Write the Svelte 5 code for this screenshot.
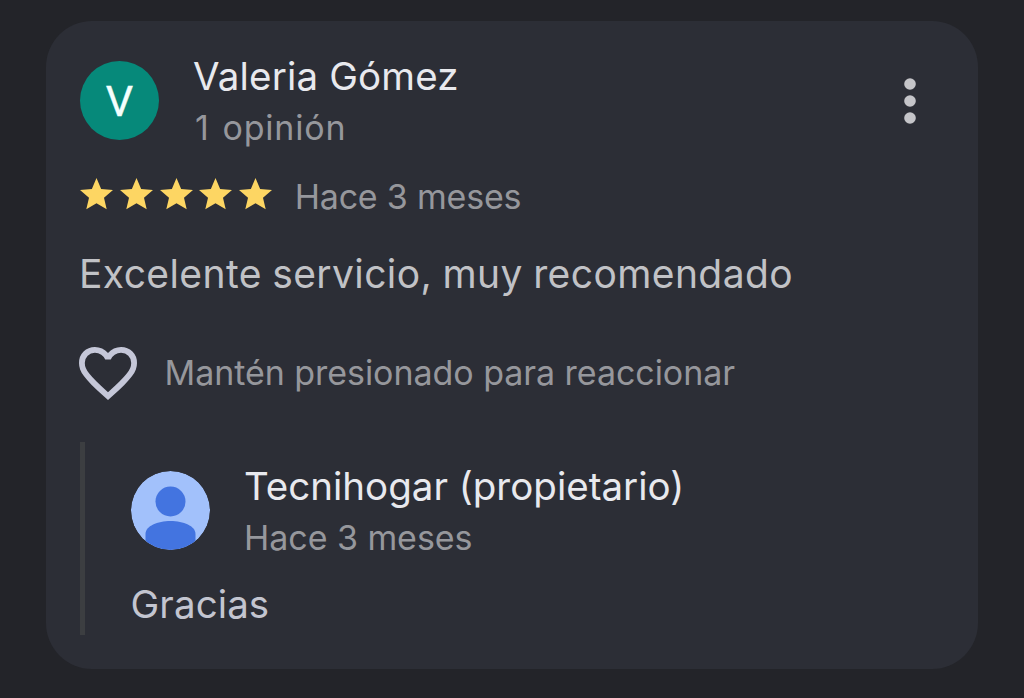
<script>
  const stars = [0, 1, 2, 3, 4];
</script>

<main class="page">
  <article class="card">
    <header class="head">
      <div class="avatar letter"><span>V</span></div>
      <div class="who">
        <div class="name">Valeria Gómez</div>
        <div class="meta count">1 opinión</div>
      </div>
      <svg class="menu" width="12" height="48" viewBox="0 0 12 48" aria-hidden="true">
        <circle cx="6" cy="7" r="5.8" />
        <circle cx="6" cy="24" r="5.8" />
        <circle cx="6" cy="41" r="5.8" />
      </svg>
    </header>

    <div class="rating">
      <div class="stars">
        {#each stars as s (s)}
          <svg width="33" height="33" viewBox="0 0 20 20" aria-hidden="true">
            <path d="M10 15.27 16.18 19l-1.64-7.03L20 7.24l-7.19-.61L10 0 7.19 6.63 0 7.24l5.46 4.73L3.82 19z" />
          </svg>
        {/each}
      </div>
      <div class="meta when">Hace 3 meses</div>
    </div>

    <p class="body review">Excelente servicio, muy recomendado</p>

    <div class="react">
      <svg class="heart" width="58" height="53" viewBox="2 2.65 20 18.35" preserveAspectRatio="none" aria-hidden="true">
        <path d="m12 21-1.45-1.3q-2.525-2.275-4.175-3.925T3.75 12.812 2.388 10.4 2 8.15Q2 5.8 3.575 4.225T7.5 2.65q1.3 0 2.475.55T12 4.75q.85-1 2.025-1.55T16.5 2.65q2.35 0 3.925 1.575T22 8.15q0 1.15-.387 2.25t-1.363 2.412-2.625 2.963T13.45 19.7zm0-2.7q2.4-2.15 3.95-3.687t2.45-2.675 1.25-2.026T20 8.15q0-1.5-1-2.5t-2.5-1q-1.175 0-2.175.662T12.95 7h-1.9q-.375-1.025-1.375-1.687T7.5 4.65q-1.5 0-2.5 1t-1 2.5q0 .875.35 1.763t1.25 2.025T8.05 14.613 12 18.3" />
      </svg>
      <div class="meta hint">Mantén presionado para reaccionar</div>
    </div>

    <section class="reply">
      <div class="head">
        <svg class="avatar" viewBox="0 0 79 79" aria-hidden="true">
          <defs><clipPath id="disc"><circle cx="39.5" cy="39.5" r="39.5" /></clipPath></defs>
          <g clip-path="url(#disc)">
            <rect width="79" height="79" fill="#a2c1fb" />
            <circle cx="39.5" cy="30.5" r="15" fill="#4374e0" />
            <path d="M14.5 79V63c0-8 12-13 25-13s25 5 25 13v16z" fill="#4374e0" />
          </g>
        </svg>
        <div class="who">
          <div class="name owner">Tecnihogar (propietario)</div>
          <div class="meta">Hace 3 meses</div>
        </div>
      </div>
      <p class="body thanks">Gracias</p>
    </section>
  </article>
</main>

<style>
  :global(body) { background: #232429; }
  .page {
    box-sizing: border-box;
    height: 698px;
    padding: 21px 46px 29px;
    background: #232429;
    font-family: Inter, Roboto, sans-serif;
    white-space: nowrap;
    overflow: hidden;
  }
  .card {
    box-sizing: border-box;
    width: 932px;
    height: 648px;
    padding: 29px 34px 0;
    border-radius: 46px;
    background: #2c2e36;
  }
  .head { display: flex; align-items: flex-start; }
  .avatar {
    flex: none;
    width: 79px;
    height: 79px;
    margin-top: 11px;
    border-radius: 50%;
  }
  .letter {
    display: flex;
    align-items: center;
    justify-content: center;
    background: #06897a;
    color: #f4fffd;
    font: 400 43px/79px Roboto, sans-serif;
    -webkit-text-stroke: 0.4px #f4fffd;
  }
  .letter span { padding-top: 2px; }
  .who { flex: 1; margin-left: 34px; }
  .name {
    font-size: 38.5px;
    line-height: 52px;
    letter-spacing: 0.17px;
    color: #e8e9ee;
  }
  .owner { letter-spacing: 0; }
  .meta {
    font-size: 34px;
    line-height: 52px;
    letter-spacing: -0.05px;
    color: #96979c;
  }
  .count {
    padding-left: 2px;
    letter-spacing: 0.8px;
    word-spacing: 2.5px;
  }
  .menu { flex: none; margin: 26.5px 28px 0 0; fill: #c5c5c9; }
  .rating {
    display: flex;
    align-items: center;
    height: 44px;
    margin-top: 21px;
  }
  .stars { display: flex; gap: 6.8px; padding-bottom: 5px; }
  .stars svg { display: block; fill: #fdd663; }
  .when { margin-left: 22.5px; letter-spacing: -0.2px; }
  .body {
    margin: 30px 0 0 -1px;
    font-size: 39px;
    line-height: 50px;
    color: #c1c2c6;
  }
  .review { letter-spacing: 0.4px; word-spacing: -1px; }
  .react {
    display: flex;
    align-items: center;
    height: 50px;
    margin-top: 49px;
  }
  .heart { flex: none; margin-left: -1px; fill: #c5c7d8; }
  .hint { margin-left: 27.5px; }
  .reply {
    box-sizing: border-box;
    height: 193px;
    margin-top: 44px;
    padding: 18px 0 0 46px;
    border-left: 5px solid #3c3e41;
  }
  .thanks {
    margin: 15px 0 0 -0.5px;
    font-size: 38.5px;
    letter-spacing: 0.1px;
    color: #c3c5d0;
  }
</style>
